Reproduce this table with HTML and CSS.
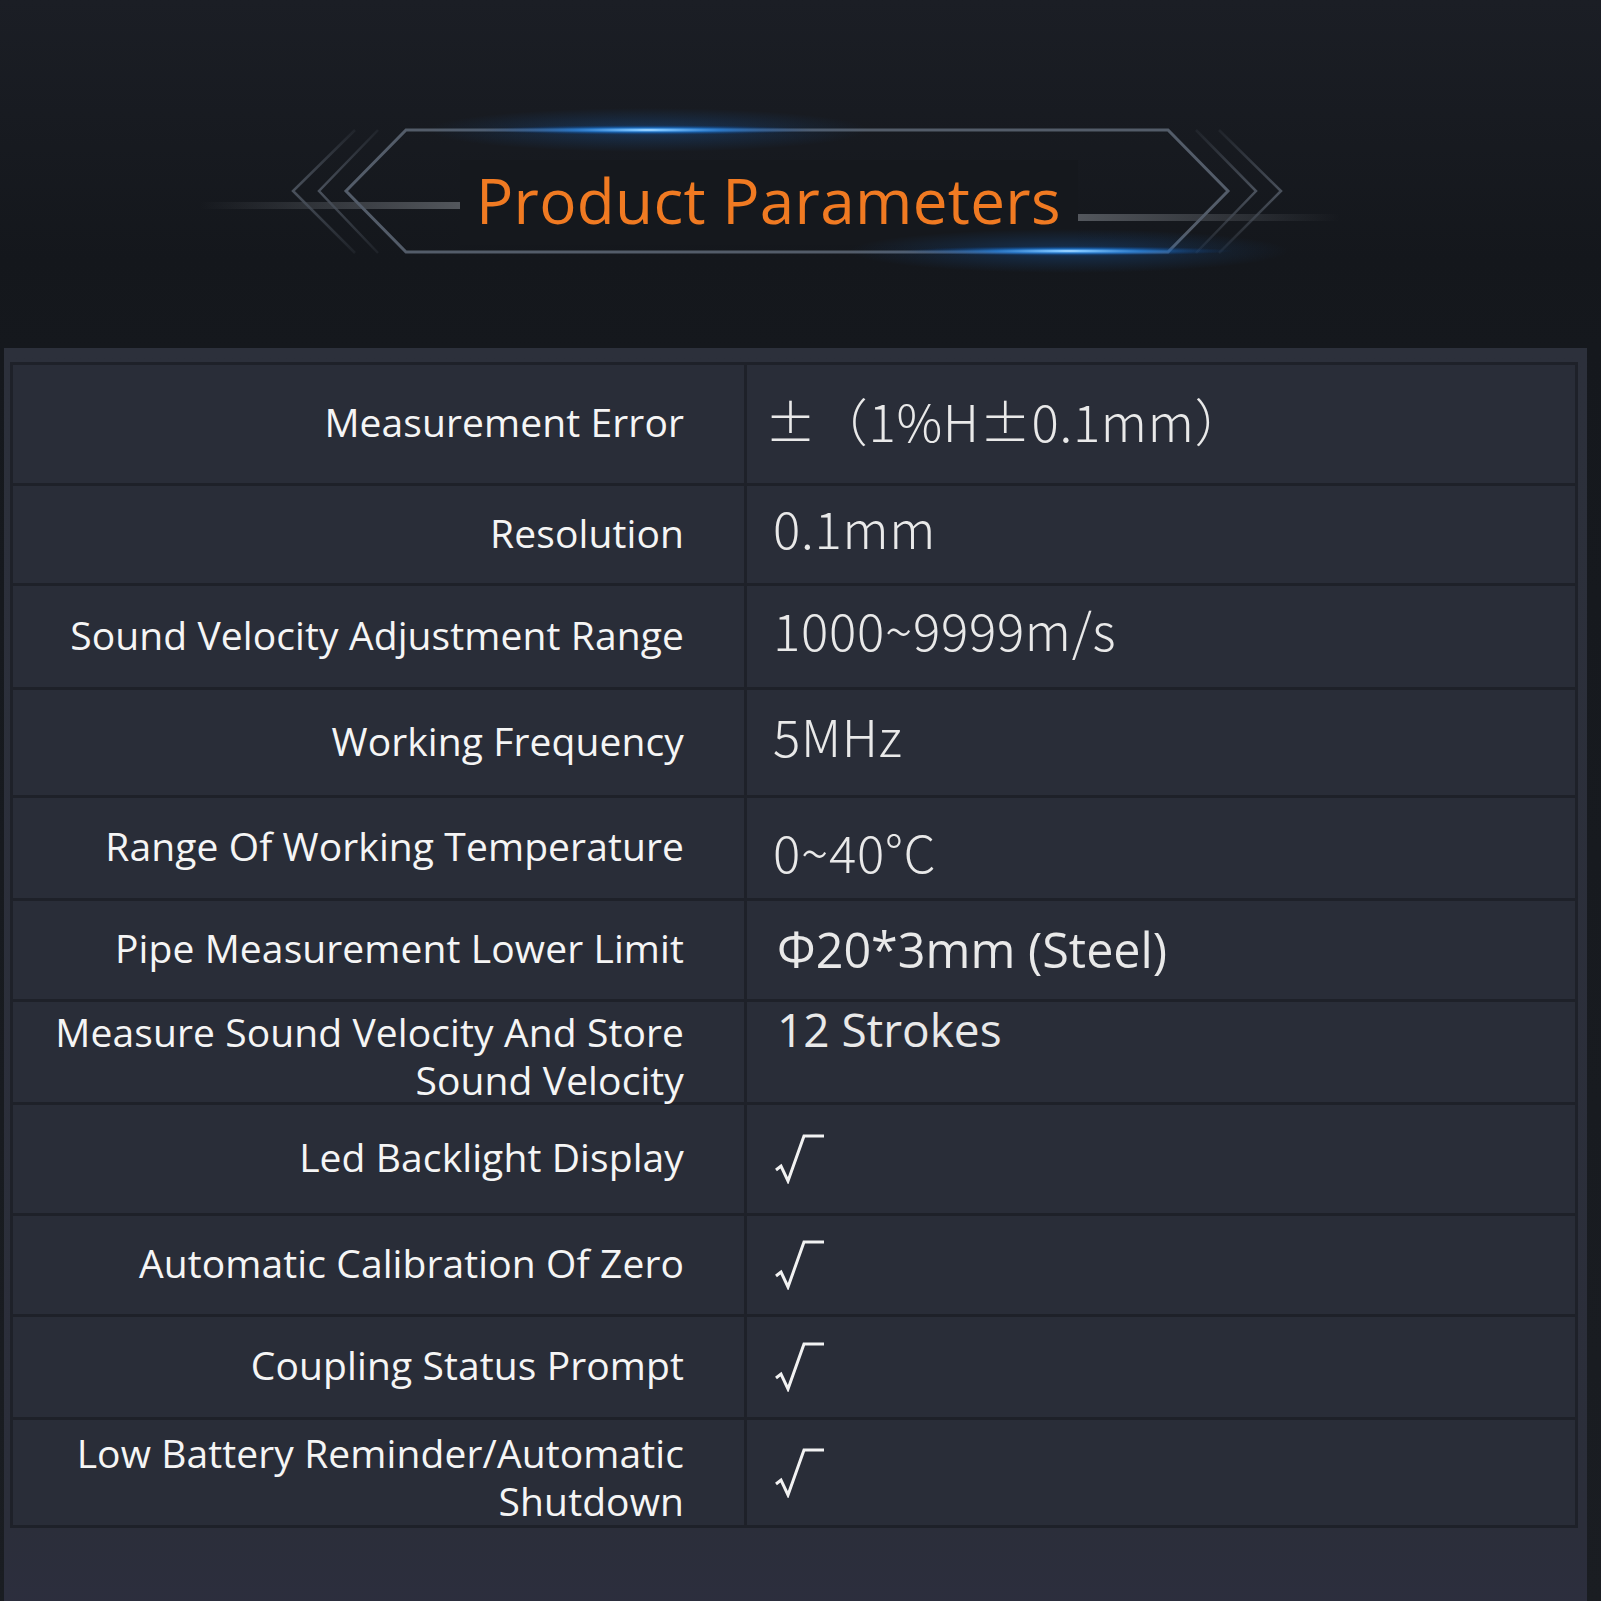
FILE: index.html
```html
<!DOCTYPE html>
<html lang="en">
<head>
  <meta charset="UTF-8">
  <meta name="viewport" content="width=device-width, initial-scale=1.0">
  <title>Product Parameters</title>
  <link rel="stylesheet" href="styles.css">
</head>
<body>

<header class="banner">
  <svg class="banner-art" width="1601" height="348" viewBox="0 0 1601 348">
    <defs>
      <radialGradient id="glow" cx="0.5" cy="0.5" r="0.5">
        <stop offset="0" stop-color="#ffffff"/>
        <stop offset="0.12" stop-color="#7cc4ff"/>
        <stop offset="0.45" stop-color="#1f7fe0" stop-opacity="0.7"/>
        <stop offset="1" stop-color="#0a3a80" stop-opacity="0"/>
      </radialGradient>
      <radialGradient id="haze" cx="0.5" cy="0.5" r="0.5">
        <stop offset="0" stop-color="#1a6fd0" stop-opacity="0.3"/>
        <stop offset="1" stop-color="#1a6fd0" stop-opacity="0"/>
      </radialGradient>
      <linearGradient id="streakL" x1="0" x2="1">
        <stop offset="0" stop-color="#5a5e64" stop-opacity="0"/>
        <stop offset="1" stop-color="#5a5e64" stop-opacity="0.9"/>
      </linearGradient>
      <linearGradient id="streakR" x1="0" x2="1">
        <stop offset="0" stop-color="#5a5e64" stop-opacity="0.9"/>
        <stop offset="1" stop-color="#5a5e64" stop-opacity="0"/>
      </linearGradient>
      <linearGradient id="fadeY" x1="0" y1="0" x2="0" y2="1">
        <stop offset="0" stop-color="#444b55" stop-opacity="0.2"/>
        <stop offset="0.5" stop-color="#4a515c"/>
        <stop offset="1" stop-color="#444b55" stop-opacity="0.2"/>
      </linearGradient>
    </defs>

    <!-- streaks behind the frame -->
    <rect x="200" y="202" width="262" height="7" fill="url(#streakL)"/>
    <rect x="1078" y="214" width="262" height="7" fill="url(#streakR)"/>

    <!-- chevrons -->
    <g fill="none" stroke="url(#fadeY)" stroke-width="2.5">
      <polyline points="355,130 293,191 355,253"/>
      <polyline points="378,130 319,191 378,253"/>
      <polyline points="1196,130 1256,191 1196,253"/>
      <polyline points="1219,130 1281,191 1219,253"/>
    </g>

    <!-- frame -->
    <polygon points="406,130 1168,130 1228,191 1168,252 406,252 346,191"
             fill="none" stroke="#535c69" stroke-width="3"/>

    <rect x="460" y="160" width="618" height="85" fill="#15181d"/>

    <!-- glows -->
    <ellipse cx="648" cy="130" rx="220" ry="22" fill="url(#haze)"/>
    <ellipse cx="648" cy="130" rx="165" ry="5" fill="url(#glow)"/>
    <ellipse cx="1069" cy="251" rx="220" ry="22" fill="url(#haze)"/>
    <ellipse cx="1069" cy="251" rx="165" ry="5" fill="url(#glow)"/>
  </svg>
  <h1 class="banner-title">Product Parameters</h1>
</header>

<main class="sheet">
  <div class="params">
    <div class="label">Measurement Error</div>
    <div class="value num first">±（1%H±0.1mm）</div>

    <div class="label">Resolution</div>
    <div class="value num">0.1mm</div>

    <div class="label">Sound Velocity Adjustment Range</div>
    <div class="value num">1000~9999m/s</div>

    <div class="label">Working Frequency</div>
    <div class="value num">5MHz</div>

    <div class="label">Range Of Working Temperature</div>
    <div class="value num low">0~40°C</div>

    <div class="label">Pipe Measurement Lower Limit</div>
    <div class="value word wide">Φ20*3mm (Steel)</div>

    <div class="label pair">Measure Sound Velocity And Store<br>Sound Velocity</div>
    <div class="value word top">12 Strokes</div>

    <div class="label">Led Backlight Display</div>
    <div class="value"><svg class="tick" viewBox="0 0 50 50"><polyline points="1,36 6,32 13,47 29,2 49,2"/></svg></div>

    <div class="label">Automatic Calibration Of Zero</div>
    <div class="value"><svg class="tick" viewBox="0 0 50 50"><polyline points="1,36 6,32 13,47 29,2 49,2"/></svg></div>

    <div class="label">Coupling Status Prompt</div>
    <div class="value"><svg class="tick" viewBox="0 0 50 50"><polyline points="1,36 6,32 13,47 29,2 49,2"/></svg></div>

    <div class="label pair">Low Battery Reminder/Automatic<br>Shutdown</div>
    <div class="value"><svg class="tick" viewBox="0 0 50 50"><polyline points="1,36 6,32 13,47 29,2 49,2"/></svg></div>
  </div>
</main>

</body>
</html>
```

FILE: styles.css
```css
body {
  margin: 0;
  background: linear-gradient(#1b1e25 0, #14171c 260px, #15181d 348px, #1a1d22 100%);
  font-family: "Open Sans", Arial, sans-serif;
  color: #f3f3f3;
  overflow: hidden;
}
.banner {
  display: grid;
  height: 348px;
}
.banner-art,
.banner-title {
  grid-area: 1 / 1;
}
.banner-art {
  display: block;
}
.banner-title {
  justify-self: start;
  align-self: start;
  margin: 158px 0 0 476px;
  font-size: 62px;
  font-weight: 400;
  line-height: 84px;
  color: #f07a22;
  letter-spacing: 0.3px;
}
.sheet {
  display: block;
  margin: 0 14px 0 4px;
  height: 1253px;
  padding: 14px 9px 0 6px;
  background: linear-gradient(#2c303b 0, #2b2e3a 1180px, #2c2e3e 100%);
}
.params {
  display: grid;
  grid-template-columns: 731px 1fr;
  grid-template-rows: 118px 97px 101px 105px 100px 98px 100px 108px 98px 100px 105px;
  gap: 3px;
  padding: 3px;
  background: #1e2129;
}
.label,
.value {
  background: #292d38;
  display: flex;
  align-items: center;
}
.label {
  justify-content: flex-end;
  text-align: right;
  padding: 0 60px 4px 0;
  font-size: 39px;
  line-height: 48px;
  letter-spacing: 0.1px;
  color: #f5f5f5;
}
.label.pair {
  padding-top: 8px;
  padding-bottom: 0;
}
.value {
  padding-left: 26px;
  color: #e9e9e9;
}
.value.num {
  font-family: "Noto Sans CJK SC", "Noto Sans", sans-serif;
  font-weight: 300;
  font-size: 51px;
  letter-spacing: 0.7px;
  padding-bottom: 16px;
}
.value.first {
  padding-left: 18px;
  padding-bottom: 8px;
}
.value.low {
  padding-top: 6px;
  padding-bottom: 0;
}
.value.word {
  padding-left: 30px;
  font-size: 46px;
  padding-top: 0;
}
.value.wide {
  font-size: 48.5px;
  padding-bottom: 2px;
}
.value.top {
  align-items: flex-start;
  line-height: 54px;
}
.tick {
  width: 50px;
  height: 50px;
  margin-left: 2px;
  fill: none;
  stroke: #f2f2f2;
  stroke-width: 3;
  stroke-linejoin: miter;
}
```
